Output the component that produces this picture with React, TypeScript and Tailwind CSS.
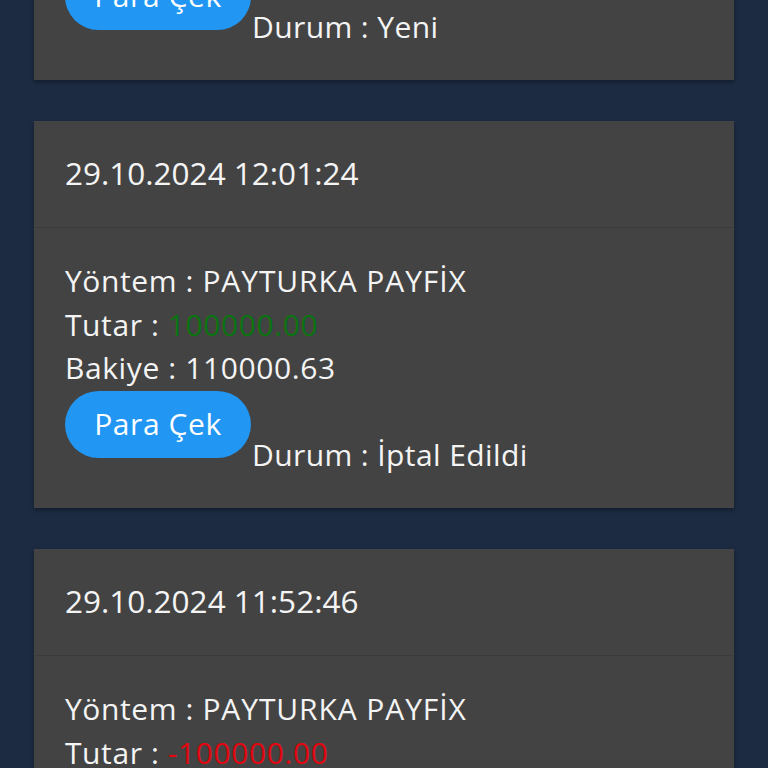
import React from "react";

type Tx = {
  date: string;
  method: string;
  amount: string;
  positive: boolean;
  balance: string;
  status: string;
};

const items: Tx[] = [
  { date: "29.10.2024 12:14:02", method: "PAYTURKA PAYFİX", amount: "100000.00", positive: true, balance: "210000.63", status: "Yeni" },
  { date: "29.10.2024 12:01:24", method: "PAYTURKA PAYFİX", amount: "100000.00", positive: true, balance: "110000.63", status: "İptal Edildi" },
  { date: "29.10.2024 11:52:46", method: "PAYTURKA PAYFİX", amount: "-100000.00", positive: false, balance: "10000.63", status: "Onaylandı" }
];

function TxCard(props: { tx: Tx }) {
  const tx = props.tx;
  return (
    <div className="bg-[#434343] shadow-[0_2px_4px_rgba(0,0,0,0.35)] text-[#f4f4f4]">
      <div className="h-[107px] flex items-center px-[31px] pb-[3px] border-b border-[#3b3b3b] text-[31.5px]">{tx.date}</div>
      <div className="px-[31px] pt-[31px] pb-[32px] text-[30px] leading-[43.5px] tracking-[0.6px]">
        <div>
          Yöntem : <span className="tracking-[0.9px]">{tx.method}</span>
        </div>
        <div>
          Tutar : <span className={tx.positive ? "text-[#0a7410]" : "text-[#e1060f]"}>{tx.amount}</span>
        </div>
        <div>Bakiye : {tx.balance}</div>
        <div className="flex items-start mt-[1px]">
          <button type="button" className="w-[186px] h-[67px] rounded-full bg-[#2196f3] text-white text-[30px] tracking-[0.6px] shrink-0">
            Para Çek
          </button>
          <span className="mt-[42px] ml-px tracking-[0.4px]">Durum : {tx.status}</span>
        </div>
      </div>
    </div>
  );
}

export default function App() {
  return (
    <div className="w-[768px] h-[768px] overflow-hidden bg-[#1c2b42]" style={{ fontFamily: "'Open Sans', 'Noto Sans', sans-serif" }}>
      <div className="mt-[-307px] px-[34px] flex flex-col gap-[41px]">
        {items.map((tx) => (
          <TxCard key={tx.date} tx={tx} />
        ))}
      </div>
    </div>
  );
}
